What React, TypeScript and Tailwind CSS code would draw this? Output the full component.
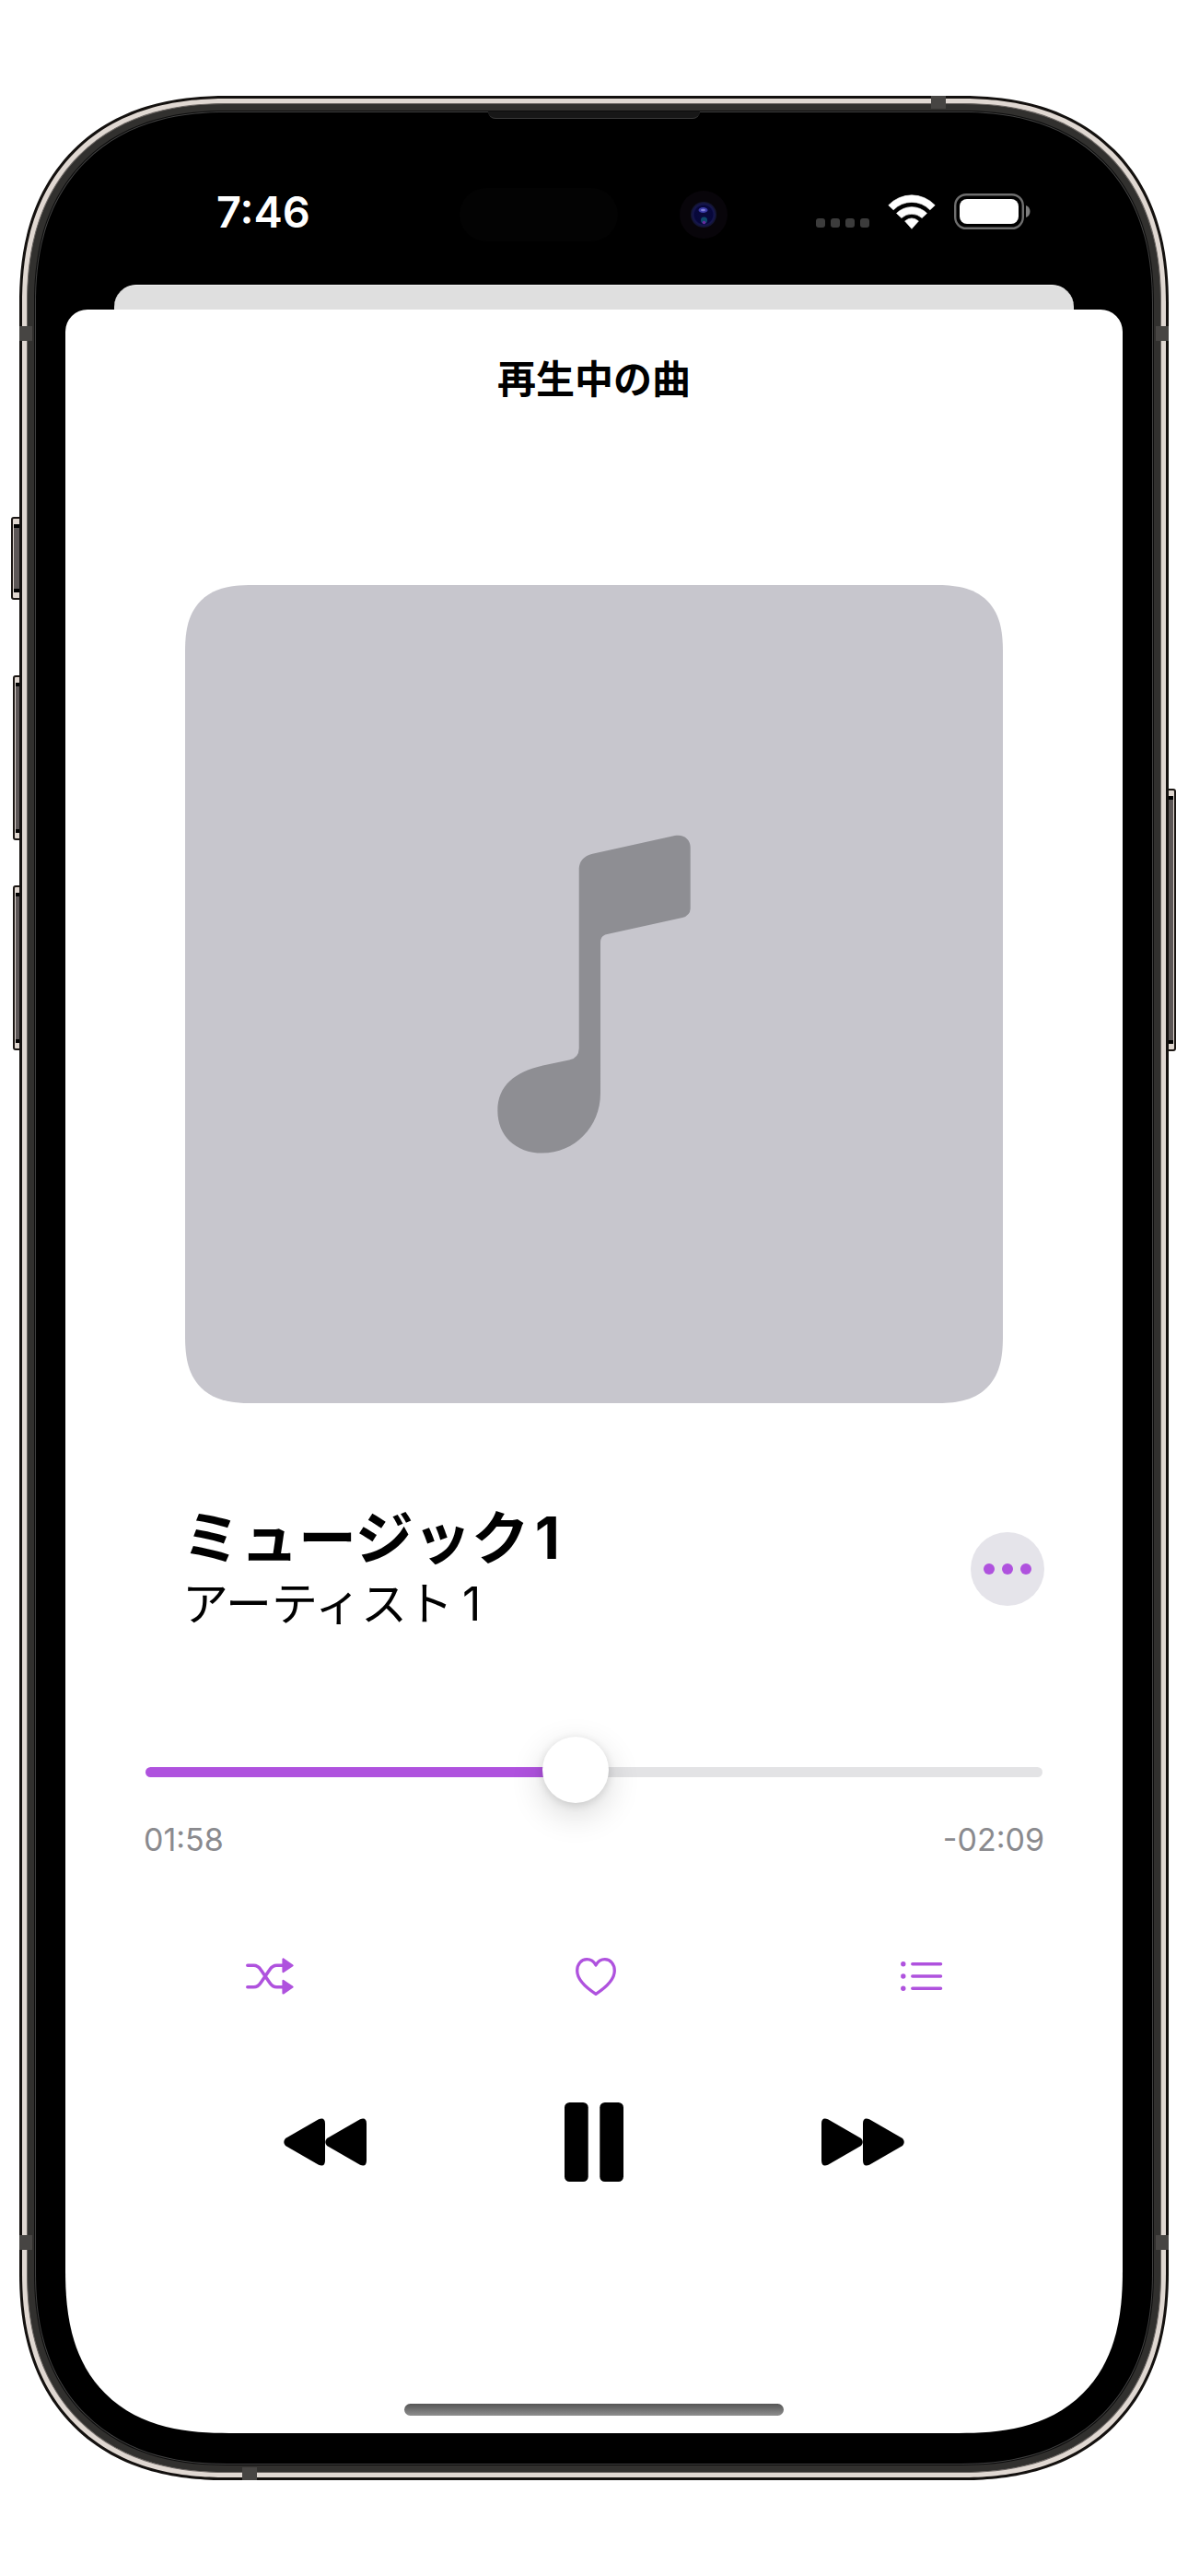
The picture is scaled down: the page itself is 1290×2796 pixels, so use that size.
import { useState } from "react";

const TRACK_SECONDS = 247;

function formatTime(seconds: number) {
  const m = Math.floor(seconds / 60);
  const s = seconds % 60;
  return `${String(m).padStart(2, "0")}:${String(s).padStart(2, "0")}`;
}

function WifiIcon() {
  return (
    <svg viewBox="314 388 154 113" className="h-[38px] w-[52px]" fill="white" stroke="white" strokeWidth="2" strokeLinejoin="round" aria-label="Wi-Fi">
      <path d="M316 423A103 103 0 0 1 466 423L450 438A82 82 0 0 0 332 438Z" />
      <path d="M342 449A69 69 0 0 1 440 449L424 464A49 49 0 0 0 358 464Z" />
      <path d="M369 474Q391 456 413 474L391 499Z" />
    </svg>
  );
}

function BatteryIcon() {
  return (
    <svg viewBox="0 0 84 39" className="h-[39px] w-[84px]" aria-label="バッテリー">
      <rect x="1.2" y="1.2" width="73.6" height="36.6" rx="12" fill="none" stroke="#6e6e6e" strokeWidth="2.4" />
      <rect x="6" y="6" width="64" height="27" rx="8" fill="white" />
      <path d="M78 13C84 14.500 84 24.500 78 26Z" fill="#7d7d7d" />
    </svg>
  );
}

function StatusBar() {
  return (
    <header className="relative flex h-[187px] items-center justify-between pt-[28px] pl-[164px] pr-[99px]">
      <time className="text-[47px] leading-[56px] font-semibold text-white">7:46</time>
      <div className="flex items-center">
        <div className="mt-[25px] mr-[20px] flex gap-[6px]" aria-hidden="true">
          <span className="size-[10px] rounded-[3px] bg-[#3c3c3c]" />
          <span className="size-[10px] rounded-[3px] bg-[#3c3c3c]" />
          <span className="size-[10px] rounded-[3px] bg-[#3c3c3c]" />
          <span className="size-[10px] rounded-[3px] bg-[#3c3c3c]" />
        </div>
        <div className="mr-[20px]">
          <WifiIcon />
        </div>
        <BatteryIcon />
      </div>

      {/* earpiece and sensor housing */}
      <div className="absolute top-[-1px] left-1/2 h-[8px] w-[230px] -translate-x-1/2 rounded-b-[8px] border-b border-[#3a3a3a] bg-[#171717]" />
      <div className="absolute top-[82px] left-1/2 flex -translate-x-1/2 items-center gap-[66px]">
        <div className="h-[58px] w-[172px] rounded-full bg-[#030303]" />
        <svg viewBox="0 0 54 54" className="size-[54px]">
          <defs>
            <radialGradient id="lens">
              <stop offset="0" stopColor="#0a0a3c" />
              <stop offset="0.7" stopColor="#07073a" />
              <stop offset="0.8" stopColor="#16164f" />
              <stop offset="1" stopColor="#12142a" />
            </radialGradient>
          </defs>
          <circle cx="27" cy="27" r="26" fill="#08050a" />
          <circle cx="27" cy="27" r="14" fill="url(#lens)" />
          <ellipse cx="26.500" cy="22" rx="5" ry="3" fill="#3c3ca8" />
          <ellipse cx="26.500" cy="22" rx="2.500" ry="1.300" fill="#8080d8" />
          <circle cx="27.500" cy="33" r="3.500" fill="#0d4a6c" />
          <circle cx="27.500" cy="35.500" r="1.800" fill="#6a2a9c" />
        </svg>
      </div>
    </header>
  );
}

function NoteIcon() {
  return (
    <svg viewBox="113 130 632 1041" className="h-[346px] w-[210px]" fill="#8e8e93" aria-hidden="true">
      <path d="M380 240Q382 203 424 192L693 133C722 127 744 145 744 170V372Q743 393 718 401L472 455Q450 459 450 482V975C450 1085 365 1170 260 1170C172 1170 114 1112 114 1032C114 950 170 905 262 884L348 866Q379 860 380 828Z" />
    </svg>
  );
}

function ShuffleIcon() {
  return (
    <svg viewBox="0 0 52 40" className="h-[40px] w-[52px]" fill="none" stroke="#af52de" strokeWidth="3.500" strokeLinecap="round" aria-hidden="true">
      <path d="M1.800 8.300H8.500C12 8.300 14 9.600 16.200 13L25.800 27C28 30.400 30 31.700 33.500 31.700H40" />
      <path d="M1.800 31.700H8.500C12 31.700 14 30.400 16.200 27L25.800 13C28 9.600 30 8.300 33.500 8.300H40" />
      <path d="M40.500 1.500V15.200L50.500 8.400ZM40.500 24.800V38.500L50.500 31.600Z" fill="#af52de" strokeWidth="2.200" strokeLinejoin="round" />
    </svg>
  );
}

function HeartIcon() {
  return (
    <svg viewBox="0 0 44 41" className="h-[41px] w-[44px]" fill="none" stroke="#af52de" strokeWidth="3.300" strokeLinejoin="round" aria-hidden="true">
      <path d="M22 8C19.800 4 16.400 1.700 12.300 1.700C6 1.700 1.700 7 1.700 14C1.700 23.500 10 31.500 22 39.300C34 31.500 42.300 23.500 42.300 14C42.300 7 38 1.700 31.700 1.700C27.600 1.700 24.200 4 22 8Z" />
    </svg>
  );
}

function ListIcon() {
  return (
    <svg viewBox="0 0 46 32" className="h-[32px] w-[46px]" stroke="#af52de" strokeWidth="3.500" strokeLinecap="round" fill="#af52de" aria-hidden="true">
      <path d="M12.800 2.800H43.500M12.800 16H43.500M12.800 29.200H43.500" />
      <g stroke="none">
        <circle cx="2.800" cy="2.800" r="2.700" />
        <circle cx="2.800" cy="16" r="2.700" />
        <circle cx="2.800" cy="29.200" r="2.700" />
      </g>
    </svg>
  );
}

function RewindIcon({ flipped = false }: { flipped?: boolean }) {
  return (
    <svg viewBox="0 0 90 52" className={flipped ? "h-[52px] w-[90px] -scale-x-100" : "h-[52px] w-[90px]"} aria-hidden="true">
      <path d="M2 22L38 1.200Q45 -1.500 45 6V46Q45 53.500 38 50.800L2 30Q-1.500 26 2 22Z" />
      <path d="M47 22L83 1.200Q90 -1.500 90 6V46Q90 53.500 83 50.800L47 30Q43.500 26 47 22Z" />
    </svg>
  );
}

function PauseIcon() {
  return (
    <svg viewBox="0 0 64 86" className="h-[86px] w-[64px]" aria-hidden="true">
      <rect width="25.700" height="86" rx="5.500" />
      <rect x="38.300" width="25.700" height="86" rx="5.500" />
    </svg>
  );
}

function Player() {
  const [elapsed, setElapsed] = useState(118);
  const played = (elapsed / TRACK_SECONDS) * 100;

  return (
    <main className="flex flex-1 flex-col rounded-t-[24px] rounded-b-[148px] bg-white pt-[44px] text-black supports-[corner-shape:squircle]:rounded-b-[178px] supports-[corner-shape:squircle]:[corner-bottom-shape:superellipse(1.32)]">
      <h1 className="text-center text-[42px] leading-[64px] font-semibold">再生中の曲</h1>

      <div className="mx-[130px] mt-[191px] flex aspect-square items-center justify-center rounded-[60px] bg-[#c7c6cd] supports-[corner-shape:squircle]:rounded-[74px] supports-[corner-shape:squircle]:[corner-shape:superellipse(1.4)]">
        <NoteIcon />
      </div>

      <div className="mt-[108px] flex items-center justify-between pr-[85px] pl-[127px]">
        <div>
          <h2 className="text-[63px] leading-[76px] font-bold">
            ミュージック<span className="ml-[6px]">1</span>
          </h2>
          <p className="text-[50px] leading-[68px]">
            アーティスト<span className="ml-[10px]">1</span>
          </p>
        </div>
        <button type="button" aria-label="その他" className="flex size-[80px] items-center justify-center gap-[8px] rounded-full bg-[#e5e4ea]">
          <span className="size-[12px] rounded-full bg-[#af52de]" />
          <span className="size-[12px] rounded-full bg-[#af52de]" />
          <span className="size-[12px] rounded-full bg-[#af52de]" />
        </button>
      </div>

      <div className="mt-[112px] px-[87px]">
        <input
          type="range"
          aria-label="再生位置"
          min={0}
          max={TRACK_SECONDS}
          value={elapsed}
          onChange={(e) => setElapsed(Number(e.target.value))}
          style={{ "--played": `${played}%` } as React.CSSProperties}
          className="block h-[72px] w-full appearance-none bg-transparent [&::-webkit-slider-runnable-track]:h-[11px] [&::-webkit-slider-runnable-track]:rounded-full [&::-webkit-slider-runnable-track]:bg-[linear-gradient(to_right,#af52de_var(--played),#e3e3e5_var(--played))] [&::-webkit-slider-thumb]:mt-[-33px] [&::-webkit-slider-thumb]:size-[72px] [&::-webkit-slider-thumb]:appearance-none [&::-webkit-slider-thumb]:rounded-full [&::-webkit-slider-thumb]:bg-white [&::-webkit-slider-thumb]:shadow-[0_12px_36px_rgba(0,0,0,0.16),0_2px_10px_rgba(0,0,0,0.12)]"
        />
      </div>
      <div className="mt-[18px] flex justify-between px-[85px] text-[34px] leading-[40px] text-[#8a8a8e]">
        <span>{formatTime(elapsed)}</span>
        <span>-{formatTime(TRACK_SECONDS - elapsed)}</span>
      </div>

      <div className="mt-[100px] flex items-center justify-between pr-[190px] pl-[194px]">
        <button type="button" aria-label="シャッフル" className="flex size-[56px] items-center justify-center">
          <ShuffleIcon />
        </button>
        <button type="button" aria-label="お気に入り" className="flex size-[56px] items-center justify-center">
          <HeartIcon />
        </button>
        <button type="button" aria-label="リスト" className="flex size-[56px] items-center justify-center">
          <ListIcon />
        </button>
      </div>

      <div className="mt-[109px] flex items-center justify-between px-[237px]">
        <button type="button" aria-label="前の曲" className="flex w-[90px] justify-center">
          <RewindIcon />
        </button>
        <button type="button" aria-label="一時停止" className="flex w-[90px] justify-center">
          <PauseIcon />
        </button>
        <button type="button" aria-label="次の曲" className="flex w-[90px] justify-center">
          <RewindIcon flipped />
        </button>
      </div>

      <div className="mt-auto mb-[19px] h-[13px] w-[412px] self-center rounded-full bg-linear-to-b from-[#565656] to-[#8f8f8f]" />
    </main>
  );
}

function SideButton({ className }: { className: string }) {
  return (
    <div className={`absolute flex rounded-[3px] border-2 border-[#1b1613] bg-[#e0d7d0] py-[6px] ${className}`}>
      <div className="flex-1 border-y-4 border-black bg-[#5c5656]" />
    </div>
  );
}

export default function App() {
  return (
    <div lang="ja" className="flex min-h-screen flex-col bg-white px-[21px] py-[104px] font-['Inter','Noto_Sans_CJK_JP',sans-serif]">
      <div className="relative flex flex-1 flex-col">
        <SideButton className="top-[457px] left-[-9px] h-[90px] w-[14px] pl-[1px]" />
        <SideButton className="top-[629px] left-[-7px] h-[179px] w-[12px] pl-[1px]" />
        <SideButton className="top-[857px] left-[-7px] h-[179px] w-[12px] pl-[1px]" />
        <SideButton className="top-[752px] right-[-8px] h-[285px] w-[12px] pr-[1px]" />

        <div className="relative flex flex-1 flex-col rounded-[200px] bg-[#14110f] p-[3px] supports-[corner-shape:squircle]:rounded-[225px] supports-[corner-shape:squircle]:[corner-shape:superellipse(1.2)]">
          <div className="flex flex-1 flex-col rounded-[197px] bg-[#e0d8d2] p-[5px] supports-[corner-shape:squircle]:rounded-[222px] supports-[corner-shape:squircle]:[corner-shape:superellipse(1.2)]">
            <div className="flex flex-1 flex-col rounded-[192px] border border-[#6b6663] bg-[#31302e] p-[7px] supports-[corner-shape:squircle]:rounded-[217px] supports-[corner-shape:squircle]:[corner-shape:superellipse(1.2)]">
              <div className="flex flex-1 flex-col rounded-[184px] border border-[#0c0c0c] bg-[#404040] p-px supports-[corner-shape:squircle]:rounded-[209px] supports-[corner-shape:squircle]:[corner-shape:superellipse(1.2)]">
                <div className="flex flex-1 flex-col rounded-[182px] bg-black px-[32px] pb-[33px] supports-[corner-shape:squircle]:rounded-[207px] supports-[corner-shape:squircle]:[corner-shape:superellipse(1.2)]">
                  <StatusBar />
                  <div className="mx-[53px] h-[27px] rounded-t-[24px] border-t border-[#f0f0f0] bg-[#dfdfdf]" />
                  <Player />
                </div>
              </div>
            </div>
          </div>

          {/* antenna bands */}
          <div className="absolute top-0 right-[242px] h-[14px] w-[16px] bg-[#474543]" />
          <div className="absolute bottom-0 left-[242px] h-[14px] w-[16px] bg-[#474543]" />
          <div className="absolute top-[250px] left-0 h-[16px] w-[14px] bg-[#474543]" />
          <div className="absolute top-[250px] right-0 h-[16px] w-[14px] bg-[#474543]" />
          <div className="absolute bottom-[250px] left-0 h-[16px] w-[14px] bg-[#474543]" />
          <div className="absolute right-0 bottom-[250px] h-[16px] w-[14px] bg-[#474543]" />
        </div>
      </div>
    </div>
  );
}
